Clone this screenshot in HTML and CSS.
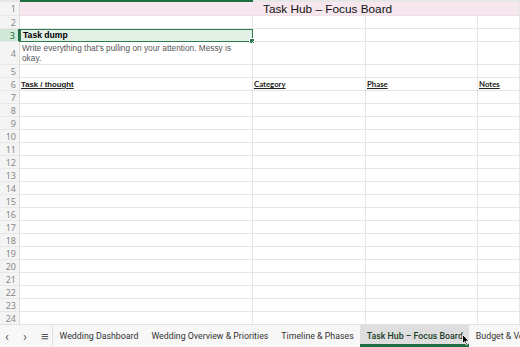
FILE: index.html
```html
<!DOCTYPE html>
<html lang="en">
<head>
    <meta charset="UTF-8">
    <title>Task Hub – Focus Board</title>
    <link rel="stylesheet" href="styles.css">
</head>
<body>
    <div class="sheet">
        <div class="colbar">
            <div class="cb-corner"></div>
            <div class="cb-a"></div>
            <div class="cb-rest"></div>
        </div>
        <div class="grid">
            <div class="rh r1">1</div>
            <div class="c title-cell">Task Hub – Focus Board</div>

            <div class="rh r2">2</div>
            <div class="c"></div><div class="c"></div><div class="c"></div><div class="c"></div>

            <div class="rh r3 rh-sel">3</div>
            <div class="c sel"><b>Task dump</b><span class="handle"></span></div>
            <div class="c"></div><div class="c"></div><div class="c"></div>

            <div class="rh r4">4</div>
            <div class="c note">Write everything that’s pulling on your attention. Messy is okay.</div>
            <div class="c"></div><div class="c"></div><div class="c"></div>

            <div class="rh r5">5</div>
            <div class="c"></div><div class="c"></div><div class="c"></div><div class="c"></div>

            <div class="rh r6">6</div>
            <div class="c hdr hdr-a">Task / thought</div>
            <div class="c hdr">Category</div>
            <div class="c hdr">Phase</div>
            <div class="c hdr">Notes</div>
        </div>
        <div class="grid body-rows" id="rows"></div>
    </div>
    <div class="tabbar">
        <div class="nav">
            <span class="arrow">&lsaquo;</span>
            <span class="arrow">&rsaquo;</span>
            <span class="menu">&#8801;</span>
        </div>
        <div class="tabs">
            <span class="tab">Wedding Dashboard</span>
            <span class="tab">Wedding Overview &amp; Priorities</span>
            <span class="tab">Timeline &amp; Phases</span>
            <span class="tab active">Task Hub – Focus Board</span>
            <span class="tab">Budget &amp; Vendors</span>
        </div>
        <svg class="cursor" width="8" height="12" viewBox="0 0 8 12">
            <path d="M0.5 0.5 L0.5 9.5 L2.6 7.6 L4.1 11 L5.4 10.4 L3.9 7.1 L6.8 7 Z" fill="#000" stroke="#fff" stroke-width="0.8"/>
        </svg>
    </div>
    <script>
        const rows = document.getElementById('rows');
        for (let i = 7; i <= 24; i++) {
            rows.innerHTML += `
                <div class="rh">${i}</div>
                <div class="c"></div><div class="c"></div><div class="c"></div><div class="c"></div>
            `;
        }
    </script>
</body>
</html>
```

FILE: styles.css
```css
body {
    margin: 0;
    width: 520px;
    height: 347px;
    overflow: hidden;
    background-color: #fff;
    font-family: "Liberation Sans", Arial, sans-serif;
}

.sheet {
    height: 324px;
    overflow: hidden;
}

.colbar {
    display: grid;
    grid-template-columns: 20px 233px 1fr;
    height: 2px;
}

.cb-corner, .cb-rest {
    background-color: #e6e6e6;
}

.cb-a {
    background-color: #1e6e42;
}

.grid {
    display: grid;
    grid-template-columns: 20px 233px 113px 112px 42px;
    grid-template-rows: 14px 13px 13px 23px 13px 13px;
}

.body-rows {
    grid-template-rows: none;
    grid-auto-rows: 13px;
}

.rh {
    background-color: #f4f4f4;
    color: #888;
    font-family: "Noto Sans", sans-serif;
    font-size: 9px;
    padding-right: 3px;
    display: flex;
    align-items: center;
    justify-content: flex-end;
    border-bottom: 1px solid #e8e8e8;
    border-right: 1px solid #dcdcdc;
    box-sizing: border-box;
}

.rh-sel {
    background-color: #cfe8d7;
    color: #1e6e42;
    border-right: 2px solid #1e6e42;
}

.c {
    border-right: 1px solid #e6e6e6;
    border-bottom: 1px solid #e6e6e6;
    box-sizing: border-box;
    font-size: 9px;
    padding: 0 2px;
    position: relative;
    white-space: nowrap;
}

.title-cell {
    grid-column: span 4;
    background-color: #f6e7ee;
    border-bottom: 1px solid #efdfe6;
    font-size: 11.8px;
    line-height: 14px;
    padding-left: 243px;
    color: #111;
}

.sel {
    background-color: #e2f0e6;
    border: 1px solid #2d7a4f;
    font-size: 8.6px;
    line-height: 11px;
    color: #000;
}

.handle {
    position: absolute;
    right: -3px;
    bottom: -3px;
    width: 4px;
    height: 4px;
    background-color: #2d7a4f;
    border: 1px solid #fff;
}

.note {
    white-space: normal;
    color: #555;
    font-size: 8.3px;
    line-height: 10px;
    padding-top: 1px;
}

.hdr {
    font-family: Lato, "Liberation Sans", sans-serif;
    font-weight: bold;
    text-decoration: underline;
    font-size: 7.8px;
    line-height: 13px;
    color: #222;
    padding-left: 1px;
}

.hdr-a {
    font-family: "Liberation Sans", Arial, sans-serif;
}

.tabbar {
    height: 23px;
    display: flex;
    align-items: stretch;
    background-color: #f7f7f7;
    border-top: 1px solid #e2e2e2;
    box-sizing: border-box;
    position: relative;
    overflow: hidden;
    font-family: Roboto, "Noto Sans", sans-serif;
}

.nav {
    width: 53px;
    display: flex;
    align-items: center;
    color: #555;
    border-right: 1px solid #e0e0e0;
    box-sizing: border-box;
    flex-shrink: 0;
    padding-left: 4px;
}

.arrow {
    font-size: 13px;
    width: 6px;
    text-align: center;
    margin-right: 12px;
}

.menu {
    font-size: 13px;
    margin-left: 1px;
}

.tabs {
    display: flex;
    white-space: nowrap;
}

.tab {
    font-size: 8.8px;
    color: #333;
    padding: 0 6.5px;
    display: flex;
    align-items: center;
}

.tab.active {
    background-color: #dedede;
    color: #1b3d28;
    font-weight: 500;
    border-bottom: 3px solid #1e6e42;
    padding-top: 3px;
}

.cursor {
    position: absolute;
    left: 462px;
    top: 9px;
}
```
